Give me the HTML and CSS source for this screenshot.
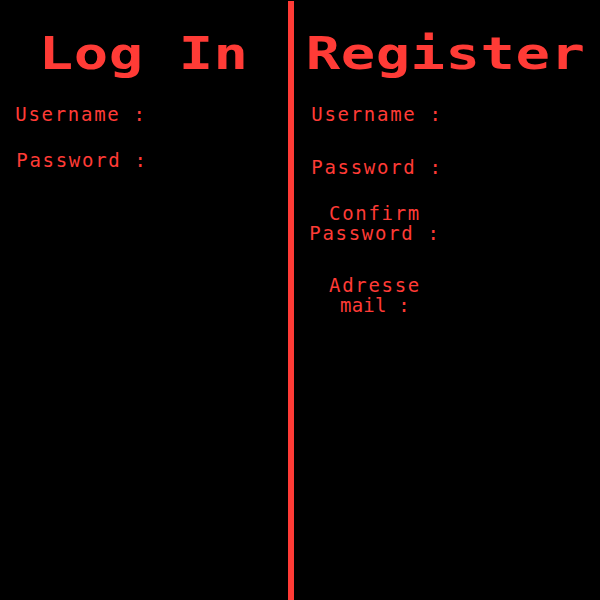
FILE: index.html
```html
<!DOCTYPE html>
<html lang="fr">
<head>
<meta charset="utf-8">
<title>Log In / Register</title>
<link rel="stylesheet" href="styles.css">
</head>
<body>
<main class="page">
  <section class="col col-login">
    <h1 class="title"><span class="title-txt">Log In</span></h1>
    <div class="field f-l1"><label class="lbl">Username :</label></div>
    <div class="field f-l2"><label class="lbl">Password :</label></div>
  </section>
  <div class="divider"></div>
  <section class="col col-register">
    <h1 class="title"><span class="title-txt">Register</span></h1>
    <div class="field f-r1"><label class="lbl">Username :</label></div>
    <div class="field f-r2"><label class="lbl">Password :</label></div>
    <div class="field f-r3"><label class="lbl">Confirm<br>Password :</label></div>
    <div class="field f-r4"><label class="lbl">Adresse<br><span class="narrow">mail :</span></label></div>
  </section>
</main>
</body>
</html>
```
FILE: styles.css
```css
html, body {
  margin: 0;
  padding: 0;
  background: #000;
}
body {
  width: 600px;
  height: 600px;
  overflow: hidden;
  color: #ff3b36;
}
.page {
  display: flex;
  height: 600px;
}
.col {
  display: flex;
  flex-direction: column;
}
.col-login {
  width: 288px;
}
.col-register {
  flex: 1;
}
.divider {
  width: 6px;
  margin-top: 1px;
  background: #ff3b36;
}
.title {
  margin: 0;
  height: 80px;
  padding-top: 32px;
  box-sizing: border-box;
  font-family: "DejaVu Sans Mono", monospace;
  font-weight: bold;
  font-size: 44px;
  line-height: 44px;
  text-align: center;
  white-space: nowrap;
}
.title-txt {
  display: inline-block;
  letter-spacing: 0.4px;
  transform: scaleX(1.3);
  transform-origin: center;
}
.col-register .title { margin-right: 2px; }
.field {
  width: 162px;
  text-align: center;
}
.lbl {
  display: block;
  font-family: "DejaVu Sans Mono", monospace;
  font-size: 19px;
  line-height: 20px;
  letter-spacing: 1.7px;
  white-space: nowrap;
}
.narrow {
  letter-spacing: 0.2px;
}
.f-l1 { margin-top: 24px; }
.f-l2 { margin-top: 26px; padding-left: 1px; }
.col-register .field { margin-left: 2px; }
.f-r1 { margin-top: 24px; }
.f-r2 { margin-top: 33px; }
.f-r3 { margin-top: 26px; margin-left: 0 !important; }
.f-r4 { margin-top: 32px; margin-left: 0 !important; }
```
